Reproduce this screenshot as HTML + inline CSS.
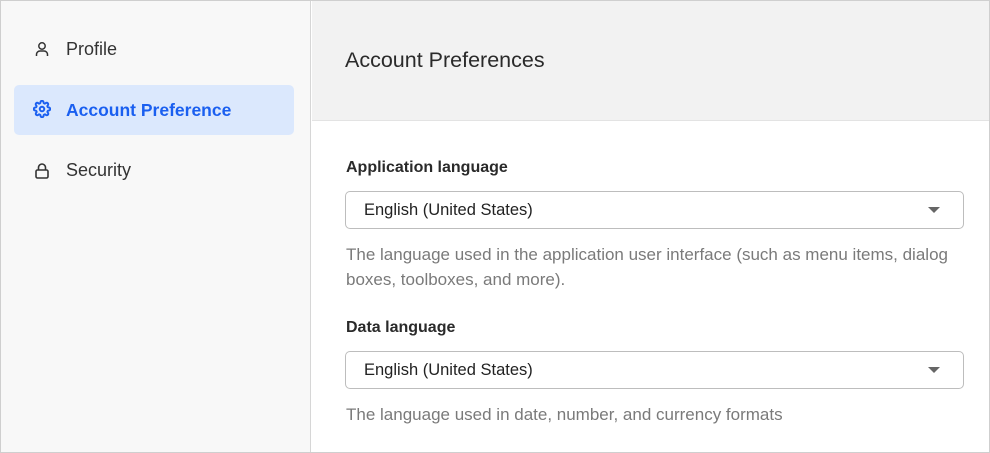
<!DOCTYPE html>
<html><head><style>
*{margin:0;padding:0;box-sizing:border-box}
body{width:990px;height:453px;overflow:hidden;font-family:"Liberation Sans",sans-serif;background:#fff}
.wrap{position:absolute;left:0;top:0;width:990px;height:453px;border:1px solid #cfcfcf}
.side{position:absolute;left:1px;top:1px;width:310px;height:451px;background:#f8f8f8;border-right:1px solid #d6d6d6}
.item{position:absolute;left:13px;width:280px;height:50px;border-radius:5px;font-size:18px;color:#333}
.item span{position:absolute;left:52px;top:14px}
.item svg{position:absolute;left:20px;top:16px}
.active{background:#dbe8fd;color:#1a5ff0}
.head{position:absolute;left:312px;top:1px;width:677px;height:120px;background:#f2f2f2;border-bottom:1px solid #e3e3e3}
.head h1{position:absolute;left:33px;top:47px;font-size:21.5px;font-weight:normal;color:#2a2a2a}
.lbl{position:absolute;left:346px;font-size:16px;font-weight:bold;color:#2a2a2a}
.sel{position:absolute;left:345px;width:619px;height:38px;border:1px solid #bdbdbd;border-radius:5px;font-size:16.5px;color:#222}
.sel span{position:absolute;left:18px;top:9px}
.sel i{position:absolute;right:23px;top:15px;width:0;height:0;border-left:6px solid transparent;border-right:6px solid transparent;border-top:6px solid #666}
.desc{position:absolute;left:346px;width:625px;font-size:17px;line-height:25px;color:#7a7a7a}
</style></head><body>
<div class="wrap"></div>
<div class="side">
 <div class="item" style="top:24px"><svg width="16" height="16" viewBox="0 0 16 16" fill="none" stroke="#333" stroke-width="1.5"><circle cx="8" cy="5" r="3.2"/><path d="M2.5 15v-1.5a3.5 3.5 0 0 1 3.5-3.5h4a3.5 3.5 0 0 1 3.5 3.5V15"/></svg><span>Profile</span></div>
 <div class="item active" style="top:84px"><svg width="18" height="18" viewBox="0 0 24 24" fill="none" stroke="#1a5ff0" stroke-width="2.6" style="left:19px;top:15px"><circle cx="12" cy="12" r="3"/><path d="M19.4 15a1.65 1.65 0 0 0 .33 1.82l.06.06a2 2 0 1 1-2.830 2.83l-.06-.06a1.65 1.65 0 0 0-1.82-.33 1.65 1.65 0 0 0-1 1.51V21a2 2 0 0 1-4 0v-.09A1.65 1.65 0 0 0 9 19.4a1.65 1.65 0 0 0-1.82.33l-.06.06a2 2 0 1 1-2.830-2.83l.06-.06a1.65 1.65 0 0 0 .33-1.82 1.65 1.65 0 0 0-1.51-1H3a2 2 0 0 1 0-4h.09A1.65 1.65 0 0 0 4.6 9a1.65 1.65 0 0 0-.33-1.820l-.06-.06a2 2 0 1 1 2.830-2.83l.06.06a1.65 1.65 0 0 0 1.82.33H9a1.65 1.65 0 0 0 1-1.51V3a2 2 0 0 1 4 0v.09a1.65 1.65 0 0 0 1 1.51 1.65 1.650 0 0 0 1.82-.33l.06-.06a2 2 0 1 1 2.830 2.83l-.06.06a1.65 1.65 0 0 0-.33 1.82V9a1.65 1.65 0 0 0 1.51 1H21a2 2 0 0 1 0 4h-.09a1.65 1.65 0 0 0-1.51 1z"/></svg><span style="font-weight:bold;font-size:17.5px;top:15px">Account Preference</span></div>
 <div class="item" style="top:145px"><svg width="16" height="17" viewBox="0 0 16 17" fill="none" stroke="#333" stroke-width="1.6"><rect x="2" y="8" width="12" height="8" rx="1.5"/><path d="M4.5 8V5.5a3.5 3.5 0 0 1 7 0V8"/></svg><span>Security</span></div>
</div>
<div class="head"><h1>Account Preferences</h1></div>
<div class="lbl" style="top:159px">Application language</div>
<div class="sel" style="top:191px"><span>English (United States)</span><i></i></div>
<div class="desc" style="top:242px">The language used in the application user interface (such as menu items, dialog boxes, toolboxes, and more).</div>
<div class="lbl" style="top:319px">Data language</div>
<div class="sel" style="top:351px"><span>English (United States)</span><i></i></div>
<div class="desc" style="top:402px">The language used in date, number, and currency formats</div>
</body></html>
